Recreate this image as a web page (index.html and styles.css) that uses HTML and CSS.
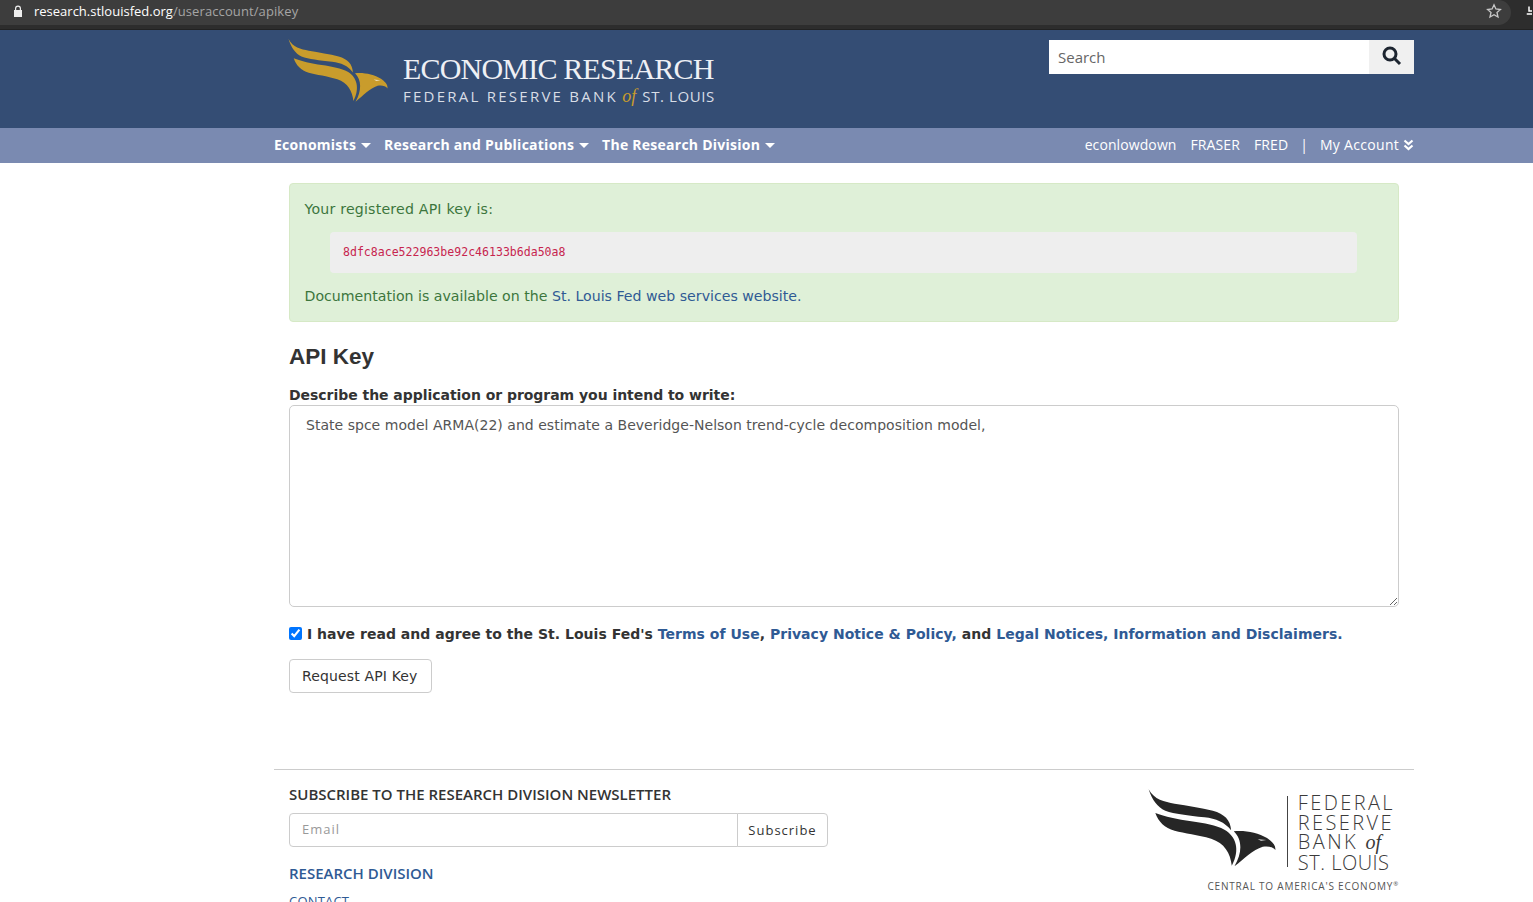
FILE: index.html
```html
<!DOCTYPE html>
<html>
  <head>
    <title>API Key | Economic Research</title>
    <meta name="viewport" content="width=device-width, initial-scale=1.0" />
    <link rel="stylesheet" href="styles.css">
  </head>
  <body>
    <svg class="svg-defs" width="0" height="0">
      <symbol id="eagle" viewBox="10 10 385 240" preserveAspectRatio="none">
        <path d="M12 14C28 45 60 52 90 57C130 63 170 70 205 78C240 88 258 105 260 137C240 112 215 102 180 98C130 92 90 88 62 78C38 68 22 45 12 14Z" />
        <path d="M32 85C60 96 100 104 140 110C180 116 215 122 240 135C275 155 288 195 262 243C258 205 240 175 200 162C160 150 120 146 90 138C60 130 42 112 32 85Z" />
        <path d="M268 140C300 136 340 144 368 160C382 170 395 180 393 196C385 186 372 184 355 186C325 195 300 222 270 245C294 205 294 165 268 140Z" />
        <path class="eagle-eye" d="M340 163L366 166L350 169Z" />
      </symbol>
    </svg>

    <div class="browser-bar">
      <div class="omnibox">
        <svg class="lock" viewBox="0 0 10 12" width="10" height="12"><path d="M2 5V3.500a3 3 0 0 1 6 0V5h1v7H1V5Zm1.200 0h3.600V3.500a1.800 1.800 0 0 0-3.600 0Z" /></svg>
        <span class="url"><span class="url-host">research.stlouisfed.org</span>/useraccount/apikey</span>
        <svg class="star" viewBox="0 0 16 16" width="16" height="16"><path d="M8 1.800l1.900 4.200 4.500.5-3.400 3 1 4.500L8 11.700 4 14l1-4.500-3.400-3 4.500-.5Z" /></svg>
      </div>
      <svg class="ext" viewBox="0 0 8 16" width="6" height="16"><path d="M3 2h2v5h3v2H3ZM1 11h7v2H1Z" /></svg>
    </div>

    <header class="site-header">
      <div class="container header-row">
        <a class="logo" href="#">
          <svg class="logo-eagle"><use href="#eagle" /></svg>
          <span class="logo-text">
            <span class="logo-title">ECONOMIC RESEARCH</span>
            <span class="logo-sub">FEDERAL RESERVE BANK <em>of</em> <span class="logo-city">ST. LOUIS</span></span>
          </span>
        </a>
        <form class="search">
          <input type="text" placeholder="Search" />
          <button type="button" aria-label="Search">
            <svg viewBox="0 0 20 20" width="20" height="20"><circle cx="8" cy="8" r="6" /><path d="M12.500 12.500L18 18" /></svg>
          </button>
        </form>
      </div>
    </header>

    <nav class="site-nav">
      <div class="container nav-row">
        <ul class="nav-main">
          <li>Economists <i class="caret"></i></li>
          <li>Research and Publications <i class="caret"></i></li>
          <li>The Research Division <i class="caret"></i></li>
        </ul>
        <ul class="nav-side">
          <li>econlowdown</li>
          <li>FRASER</li>
          <li>FRED</li>
          <li class="nav-sep">|</li>
          <li class="nav-account">My Account
            <svg class="chevrons" viewBox="0 0 11 12" width="11" height="12"><path d="M1.500 1.500L5.500 5l4-3.500M1.500 6.500l4 3.500 4-3.500" /></svg>
          </li>
        </ul>
      </div>
    </nav>

    <main class="container content">
      <div class="alert">
        <p class="alert-intro">Your registered API key is:</p>
        <pre>8dfc8ace522963be92c46133b6da50a8</pre>
        <p>Documentation is available on the <a href="#">St. Louis Fed web services website.</a></p>
      </div>

      <h2>API Key</h2>

      <form class="key-form">
        <label class="desc-label" for="desc">Describe the application or program you intend to write:</label>
        <textarea id="desc">State spce model ARMA(22) and estimate a Beveridge-Nelson trend-cycle decomposition model,</textarea>
        <label class="agree">
          <input type="checkbox" checked />
          I have read and agree to the St. Louis Fed's <a href="#">Terms of Use</a>, <a href="#">Privacy Notice &amp; Policy,</a> and <a href="#">Legal Notices, Information and Disclaimers.</a>
        </label>
        <button class="btn" type="button">Request API Key</button>
      </form>
    </main>

    <footer class="container site-footer">
      <div class="footer-left">
        <h4>SUBSCRIBE TO THE RESEARCH DIVISION NEWSLETTER</h4>
        <div class="subscribe">
          <input type="text" placeholder="Email" />
          <button type="button">Subscribe</button>
        </div>
        <h4 class="footer-link"><a href="#">RESEARCH DIVISION</a></h4>
        <a class="footer-sub" href="#">CONTACT</a>
      </div>
      <div class="footer-logo">
        <div class="footer-mark">
          <svg class="footer-eagle"><use href="#eagle" /></svg>
          <span class="footer-rule"></span>
          <div class="footer-name">FEDERAL<br />RESERVE<br />BANK <em>of</em><br /><span class="footer-city">ST. LOUIS</span></div>
        </div>
        <div class="footer-tag">CENTRAL TO AMERICA'S ECONOMY<sup>®</sup></div>
      </div>
    </footer>
  </body>
</html>
```

FILE: styles.css
```css
/* Page base */
html,
body {
  height: 100%;
  overflow: hidden;
}

body {
  margin: 0;
  font-family: "DejaVu Sans", sans-serif;
  font-size: 14px;
  color: #333;
  background-color: #fff;
}

a {
  color: #2f5a94;
  text-decoration: none;
}

.svg-defs {
  display: block;
  height: 0;
}

.eagle-eye {
  fill: #fff;
  opacity: 0.7;
}

.container {
  box-sizing: border-box;
  width: 1140px;
  margin-left: 274px;
}

/* Browser chrome */
.browser-bar {
  display: flex;
  height: 30px;
  box-sizing: border-box;
  border-bottom: 1px solid #222;
  background-color: #2d2d2d;
}

.omnibox {
  display: flex;
  align-items: center;
  width: 1511px;
  height: 25px;
  padding: 0 10px 3px 13px;
  box-sizing: border-box;
  background-color: #3d3d3d;
  border-radius: 0 13px 13px 0;
}

.lock {
  fill: #eee;
  margin-right: 11px;
}

.url {
  flex: 1;
  font-family: "Open Sans", sans-serif;
  font-size: 13px;
  letter-spacing: 0.100px;
  color: #a5a5a5;
}

.url-host {
  letter-spacing: 0;
  color: #fff;
}

.star {
  fill: none;
  stroke: #c8c8c8;
  stroke-width: 1.300;
  margin-right: -1px;
}

.ext {
  margin: 3px 0 0 15px;
  fill: #fff;
}

/* Header */
.site-header {
  height: 98px;
  background-color: #344d74;
}

.header-row {
  display: flex;
  justify-content: space-between;
  align-items: flex-start;
}

.logo {
  display: flex;
  margin: 8px 0 0 13.500px;
  color: #fff;
}

.logo-eagle {
  width: 100px;
  height: 65px;
  fill: #c99c2c;
}

.logo-text {
  display: flex;
  flex-direction: column;
  margin: 13px 0 0 15.500px;
}

.logo-title {
  font-family: "Liberation Serif", serif;
  font-size: 30px;
  line-height: 36px;
  letter-spacing: -0.800px;
  color: #eef0f5;
}

.logo-sub {
  font-family: "Open Sans", sans-serif;
  font-size: 15px;
  line-height: 18px;
  letter-spacing: 2.250px;
  color: #d8dde6;
  white-space: nowrap;
}

.logo-sub em {
  margin-left: -2px;
  font-family: "Liberation Serif", serif;
  font-size: 18px;
  letter-spacing: 0;
  color: #c99c2c;
}

.logo-city {
  letter-spacing: 0.600px;
}

.search {
  display: flex;
  width: 365px;
  height: 34px;
  margin-top: 10px;
}

.search input {
  flex: 1;
  min-width: 0;
  padding: 0 9px;
  border: 0;
  font-family: "Open Sans", sans-serif;
  font-size: 15px;
}

.search input::placeholder {
  color: #666;
}

.search button {
  width: 45px;
  padding: 0;
  border: 0;
  background-color: #f0f0f0;
}

.search svg {
  display: block;
  margin: 0 auto 2px;
  fill: none;
  stroke: #1d2530;
  stroke-width: 3;
}

/* Nav */
.site-nav {
  height: 35px;
  background-color: #7a8ab1;
  font-family: "Open Sans", sans-serif;
  font-size: 14px;
  color: #fff;
}

.nav-row {
  display: flex;
  justify-content: space-between;
  align-items: center;
  height: 33px;
}

.nav-main,
.nav-side {
  display: flex;
  margin: 0;
  padding: 0;
  list-style: none;
  white-space: nowrap;
}

.nav-main {
  gap: 13px;
  font-weight: 700;
  letter-spacing: 0.250px;
}

.nav-side {
  gap: 14px;
  letter-spacing: 0.100px;
}

.nav-sep {
  margin: 0 -2px;
}

.nav-account {
  letter-spacing: 0.300px;
}

.caret {
  display: inline-block;
  margin-left: 1px;
  vertical-align: 2px;
  border-top: 5px solid #fff;
  border-left: 5px solid transparent;
  border-right: 5px solid transparent;
}

.chevrons {
  vertical-align: -1px;
  fill: none;
  stroke: #fff;
  stroke-width: 2.200;
}

/* Main content */
.content {
  padding: 20px 15px 0;
}

.alert {
  box-sizing: border-box;
  height: 139px;
  padding: 15px 15px 15px 14.500px;
  border: 1px solid #d6e9c6;
  border-radius: 4px;
  background-color: #dff0d8;
  color: #3c763d;
}

.alert p {
  margin: 0;
  font-size: 14.150px;
  line-height: 20px;
}

.alert .alert-intro {
  letter-spacing: 0.200px;
}

.alert pre {
  height: 41px;
  margin: 13px 26px 13px 25.500px;
  padding: 0 13px;
  box-sizing: border-box;
  border-radius: 4px;
  background-color: #eee;
  font-family: "DejaVu Sans Mono", monospace;
  font-size: 11.550px;
  line-height: 41px;
  color: #c7254e;
}

h2 {
  margin: 21px 0 14px;
  font-family: "Liberation Sans", sans-serif;
  font-size: 22.500px;
  line-height: 28px;
  font-weight: 700;
  color: #333;
}

.desc-label {
  display: block;
  line-height: 20px;
  font-weight: 700;
  letter-spacing: -0.040px;
}

.key-form textarea {
  display: block;
  box-sizing: border-box;
  width: 100%;
  height: 202px;
  padding: 9px 16px;
  border: 1px solid #ccc;
  border-radius: 5px;
  font-family: inherit;
  font-size: 14px;
  line-height: 20px;
  letter-spacing: 0.025px;
  color: #555;
}

.agree {
  display: block;
  margin-top: 17px;
  line-height: 20px;
  font-weight: 700;
  letter-spacing: 0.020px;
  white-space: nowrap;
}

.agree input {
  margin: 0;
  vertical-align: -1px;
}

.btn {
  display: block;
  box-sizing: border-box;
  height: 34px;
  margin-top: 15px;
  padding: 0 13px 0 12px;
  border: 1px solid #ccc;
  border-radius: 4px;
  background-color: #fff;
  font-family: inherit;
  font-size: 14px;
  letter-spacing: 0.150px;
  color: #333;
}

/* Footer */
.site-footer {
  display: flex;
  justify-content: space-between;
  margin-top: 76px;
  padding: 0 15px;
  border-top: 1px solid #ccc;
  font-family: "Open Sans", sans-serif;
}

.site-footer h4 {
  margin: 15px 0 10px;
  font-size: 15px;
  line-height: 18px;
  font-weight: 600;
  color: #333;
}

.subscribe {
  display: flex;
  width: 539px;
  height: 34px;
}

.subscribe input {
  flex: 1;
  min-width: 0;
  padding: 0 12px 2px;
  border: 1px solid #ccc;
  border-radius: 4px 0 0 4px;
  font-family: inherit;
  font-size: 13px;
  letter-spacing: 1px;
}

.subscribe input::placeholder {
  color: #999;
}

.subscribe button {
  width: 91px;
  padding: 0;
  border: 1px solid #ccc;
  border-radius: 0 4px 4px 0;
  margin-left: -1px;
  background-color: #fff;
  font-family: inherit;
  font-size: 13px;
  letter-spacing: 1px;
  color: #333;
}

.site-footer .footer-link {
  margin: 17px 0 10px;
}

.footer-link a {
  color: #2f5a94;
}

.footer-sub {
  display: block;
  font-size: 13px;
  line-height: 18px;
  letter-spacing: 0.200px;
}

.footer-logo {
  display: flex;
  flex-direction: column;
  align-items: flex-end;
  margin-top: 18px;
}

.footer-mark {
  display: flex;
  align-items: flex-start;
}

.footer-eagle {
  width: 128px;
  height: 80px;
  fill: #262626;
}

.footer-rule {
  width: 1px;
  height: 71px;
  margin: 8px 0 0 11px;
  background-color: #444;
}

.footer-name {
  margin: 5px 4px 0 10px;
  font-size: 20px;
  font-weight: 300;
  line-height: 19.500px;
  letter-spacing: 2.400px;
  color: #3a3a3a;
}

.footer-name em {
  font-family: "Liberation Serif", serif;
  letter-spacing: 0;
}

.footer-city {
  letter-spacing: 0.500px;
}

.footer-tag {
  margin-top: 7px;
  font-size: 10px;
  line-height: 14px;
  letter-spacing: 0.800px;
  color: #555;
}

.footer-tag sup {
  font-size: 6px;
  line-height: 0;
}
```
